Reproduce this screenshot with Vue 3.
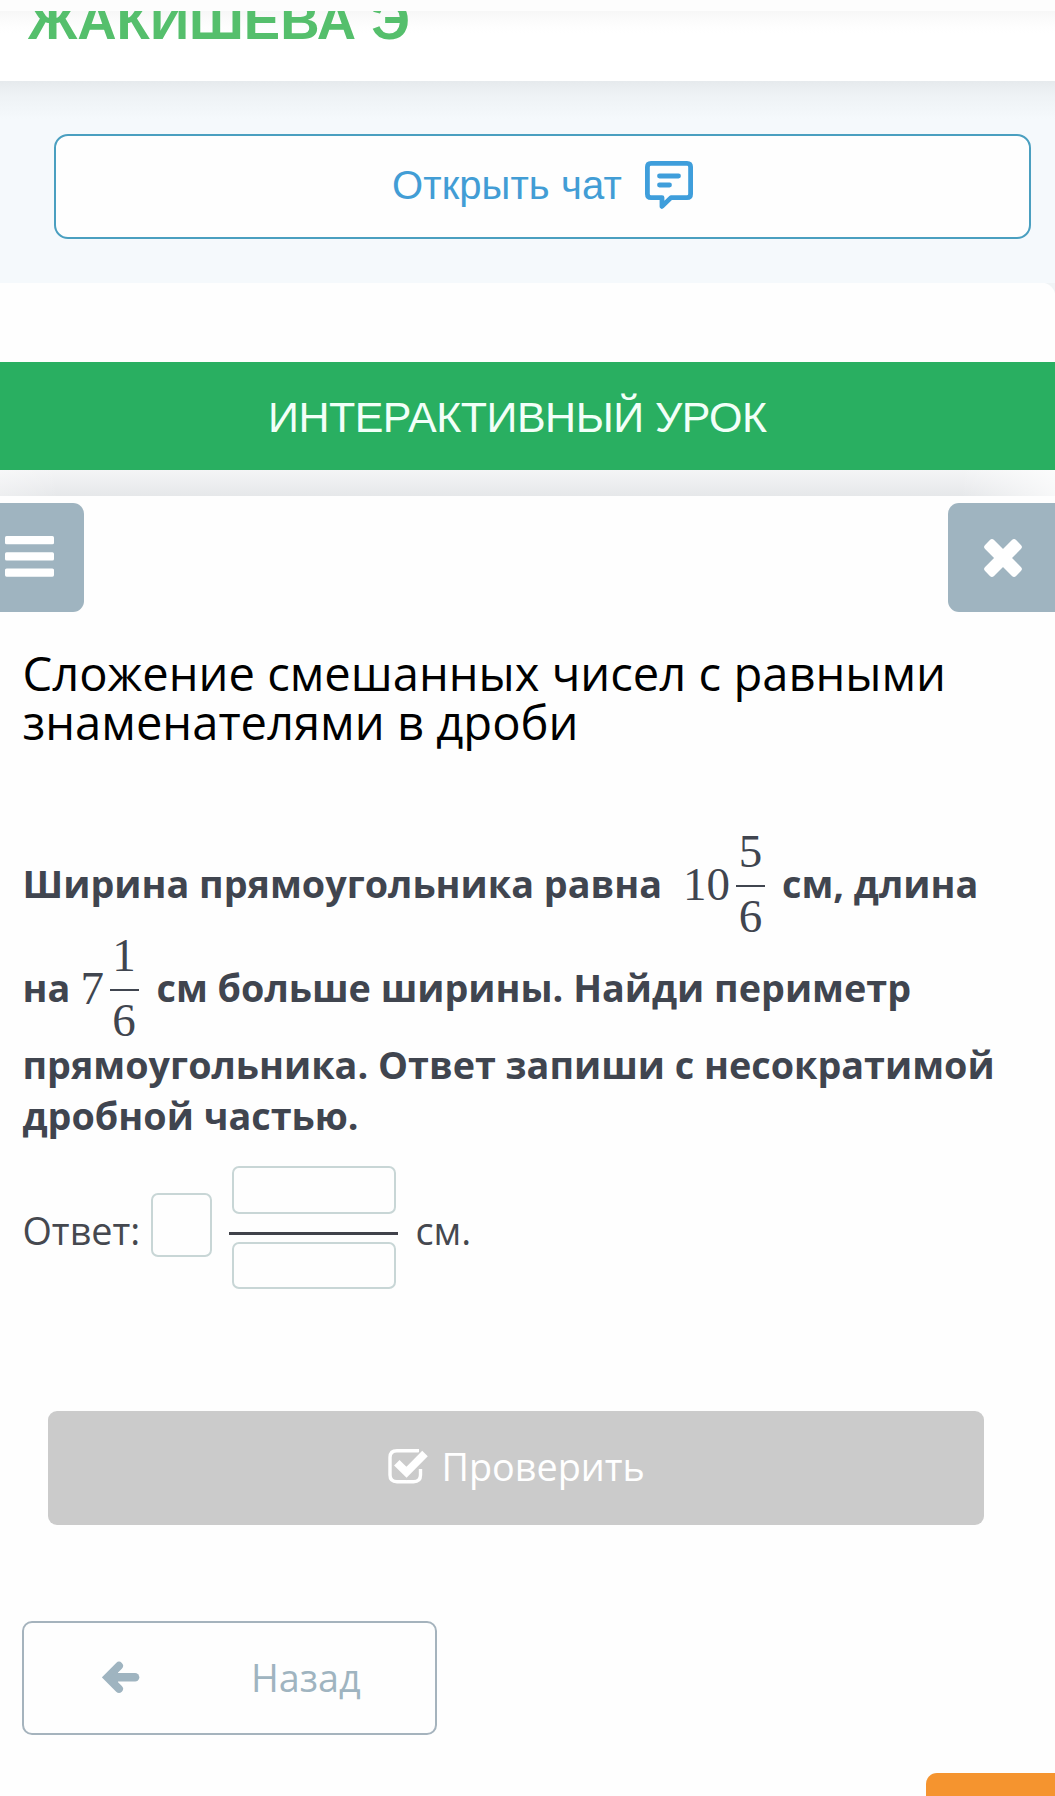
<script setup>
const title = ['Сложение смешанных чисел с равными', 'знаменателями в дроби']
</script>

<template>
  <div class="page">
    <header class="top">
      <div class="strip"></div>
      <div class="name-clip"><span class="name">ЖАКИШЕВА Э</span></div>
    </header>

    <section class="chat-area">
      <button class="chat">
        <span class="chat-text">Открыть чат</span>
        <svg class="chat-icon" viewBox="0 0 48 48" fill="none" stroke="#3f9edb" stroke-width="4.8" stroke-linejoin="round" stroke-linecap="round">
          <path d="M6 2.4H42Q45.6 2.4 45.6 6V33Q45.6 36.6 42 36.6H26L17 45.4V36.6H6Q2.4 36.6 2.4 33V6Q2.4 2.4 6 2.4Z" />
          <path d="M14.5 15H33.5M14.5 24H24.5" />
        </svg>
      </button>
    </section>

    <div class="card-top"></div>
    <div class="banner"><span class="banner-text">ИНТЕРАКТИВНЫЙ УРОК</span></div>
    <div class="shade"></div>

    <nav class="tools">
      <button class="tool menu">
        <svg width="49" height="41" viewBox="0 0 49 41" fill="#fff">
          <rect width="49" height="8.3" rx="1.6" /><rect y="16.2" width="49" height="8.3" rx="1.6" /><rect y="32.4" width="49" height="8.3" rx="1.6" />
        </svg>
      </button>
      <button class="tool close">
        <svg width="38" height="38" viewBox="0 0 39 39" fill="#fff">
          <g transform="rotate(45 19.5 19.5)"><rect x="-3" y="13" width="45" height="13" rx="3" /><rect x="13" y="-3" width="13" height="45" rx="3" /></g>
        </svg>
      </button>
    </nav>

    <h1 class="title">
      <span v-for="line in title" :key="line">{{ line }}</span>
    </h1>

    <div class="problem">
      <div class="row tall">
        <span class="p1">Ширина прямоугольника равна</span>
        <span class="whole ten">10</span>
        <span class="frac"><span class="num">5</span><i></i><span class="den">6</span></span>
        <span class="p2">см, длина</span>
      </div>
      <div class="row tall second">
        <span class="p3">на</span>
        <span class="whole seven">7</span>
        <span class="frac"><span class="num">1</span><i></i><span class="den">6</span></span>
        <span class="p4">см больше ширины. Найди периметр</span>
      </div>
      <div class="row"><span>прямоугольника. Ответ запиши с несократимой</span></div>
      <div class="row"><span>дробной частью.</span></div>
    </div>

    <div class="answer">
      <span class="label">Ответ:</span>
      <input class="box int" />
      <div class="stack">
        <input class="box part" />
        <div class="bar"></div>
        <input class="box part lower" />
      </div>
      <span class="unit">см.</span>
    </div>

    <button class="check">
      <svg width="41" height="35" viewBox="0 0 41 35" fill="none" stroke="#fff">
        <path d="M31 1.8H9Q2 1.8 2 8.5V26Q2 32.7 9 32.7H25.5Q32.5 32.7 32.5 26V20" stroke-width="3.4" />
        <path d="M8.5 13.5L18.5 23.5L37.5 4.5" stroke="#cbcbcb" stroke-width="11" />
        <path d="M8.8 13.8L18.5 23.2L37 4.5" stroke-width="7.8" />
      </svg>
      <span class="check-text">Проверить</span>
    </button>

    <button class="back">
      <svg width="38" height="33" viewBox="0 0 38 33" fill="none" stroke="#9fb4c0" stroke-width="8.6" stroke-linecap="round">
        <path d="M33 16.3H12" />
        <path d="M17 4.8L5.5 16.3L17 27.8" stroke-width="8" stroke-linejoin="miter" />
        <path d="M16 9V24L8 16.3Z" fill="#9fb4c0" stroke="none" />
      </svg>
      <span class="back-text">Назад</span>
    </button>

    <div class="corner"></div>
  </div>
</template>

<style>
html, body { margin: 0; background: #fefefe; overflow: hidden; }
</style>

<style scoped>
.page { width: 1055px; height: 1796px; overflow: hidden; display: flex; flex-direction: column; background: #fefefe; font-family: "Open Sans", "Noto Sans", sans-serif; }
.page > * { flex-shrink: 0; box-sizing: border-box; }
button { box-sizing: border-box; padding: 0; margin: 0; font: inherit; cursor: pointer; }
span { white-space: nowrap; }
svg { display: block; flex-shrink: 0; }

.top { height: 81px; background: #fff; }
.strip { height: 11px; background: #fdfdfd; }
.name-clip { height: 70px; overflow: hidden; padding-left: 28px; background: linear-gradient(#f7f7f7, #fdfdfd 14px, #fff 22px); }
.name { display: block; margin-top: -20px; font: bold 54.5px/60px "Liberation Sans", Arial, sans-serif; color: #55bf6c; }

.chat-area { height: 202px; padding: 53px 24px 0 54px; background: linear-gradient(#e6eaed, #eef2f5 14px, #f5f9fc 38px, #f5f9fc); }
.chat { width: 977px; height: 105px; display: flex; align-items: center; background: #fefefe; border: 2px solid #4a9fc0; border-radius: 14px; padding-left: 336px; }
.chat-text { width: 253px; margin-top: -3px; font: 40px/60px "Liberation Sans", Arial, sans-serif; letter-spacing: .1px; color: #429dd5; text-align: left; }
.chat-icon { width: 48px; height: 48px; margin-top: -3px; }

.card-top { height: 79px; background: radial-gradient(circle at 0 100%, #fefefe 14px, #f0f4f6 15px) 100% 0 / 14px 14px no-repeat #fefefe; }
.banner { height: 108px; background: #29af61; padding-left: 268px; color: #f2fff8; overflow: hidden; }
.banner-text { display: block; margin-top: 25px; font: 43px/60px "Liberation Sans", Arial, sans-serif; letter-spacing: -.52px; }
.shade { height: 26px; background: linear-gradient(90deg, rgba(255,255,255,.3), rgba(255,255,255,0) 60px, rgba(255,255,255,0) 960px, rgba(255,255,255,.7)), linear-gradient(#f4f5f6, #e6e8ea); }

.tools { display: flex; justify-content: space-between; padding-top: 7px; height: 116px; }
.tool { height: 109px; border: 0; background: #9fb4c0; display: flex; align-items: center; }
.menu { width: 84px; border-radius: 0 11px 11px 0; padding-left: 5px; }
.menu svg { margin-top: -3px; }
.close { width: 107px; border-radius: 11px 0 0 11px; padding-left: 36px; }

.title { margin: 37px 0 0 22.5px; height: 98px; color: #000; font-size: 47.15px; font-weight: 400; line-height: 49px; }
.title span { display: block; }

.problem { margin-top: 86px; padding-left: 22.5px; color: #40454f; font-weight: 700; font-size: 37.75px; }
.row { display: flex; align-items: center; height: 51px; line-height: 52px; }
.row.tall { height: 102px; }
.row.second { height: 104px; }
.second > * { position: relative; top: 1px; }
.whole, .frac { font-family: "Liberation Serif", "Times New Roman", serif; font-weight: 400; font-size: 47px; line-height: 52px; }
.frac { display: flex; flex-direction: column; width: 29px; text-align: center; margin-top: 4px; }
.num { height: 53px; line-height: 38px; }
.frac i { height: 2px; background: #40454f; }
.den { height: 53px; line-height: 58px; }
.p1 { width: 660.5px; }
.ten { width: 53px; }
.p2 { margin-left: 17px; }
.p3 { width: 58px; }
.seven { width: 29px; }
.p4 { margin-left: 18px; }

.answer { margin-top: 24px; padding-left: 22.5px; height: 126px; display: flex; color: #45484f; font-size: 37.75px; line-height: 52px; }
.label { width: 128.5px; margin-top: 40px; }
.box { box-sizing: border-box; display: block; padding: 0; margin: 0; border: 2px solid #c8d6d6; border-radius: 7px; background: #fefefe; }
.int { width: 61px; height: 64px; margin-top: 28px; }
.stack { width: 169px; margin-left: 17px; }
.part { width: 164px; height: 48px; margin: 1px 0 0 3px; }
.bar { height: 3px; background: #40424a; margin-top: 18px; }
.lower { margin-top: 7px; height: 47px; }
.unit { margin: 40px 0 0 17.5px; }

.check { width: 936px; height: 114px; margin: 120px 0 0 48px; border: 0; border-radius: 9px; background: #cbcbcb; color: #fff; display: flex; align-items: center; padding-left: 340px; }
.check svg { margin-top: -4px; }
.check-text { margin: -2px 0 0 12.5px; font-size: 37.75px; line-height: 52px; }

.back { width: 415px; height: 114px; margin: 96px 0 0 22px; border: 2px solid #a5b3bd; border-radius: 10px; background: #fefefe; color: #9fb4c0; display: flex; align-items: center; padding-left: 78px; }
.back svg { margin-top: -1px; }
.back-text { margin: 0 0 0 111px; font-size: 37.75px; line-height: 52px; }

.corner { margin: 38px 0 0 926px; height: 23px; background: #f5942f; border-top-left-radius: 11px; }
</style>
